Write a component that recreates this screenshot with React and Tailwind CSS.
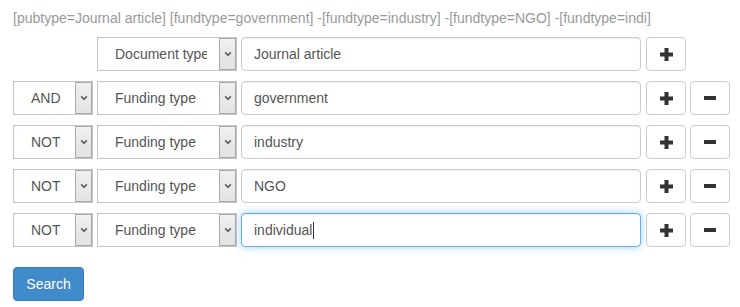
import React from "react";

const font = { fontFamily: '"Liberation Sans", Arial, sans-serif' };

function Chevron() {
  return (
    <svg width="8" height="6" viewBox="0 0 8 6">
      <path d="M1.2 1.4 L4 4.2 L6.8 1.4" fill="none" stroke="#555" strokeWidth="1.5" />
    </svg>
  );
}

function Select({ text, wide }) {
  return (
    <div
      className={`flex h-[34px] shrink-0 items-stretch border border-[#c4c4c4] bg-white ${
        wide ? "w-[140px]" : "w-[80px]"
      }`}
    >
      <div className="flex min-w-0 flex-1 items-center overflow-hidden whitespace-nowrap pl-[17px] pr-[12px] text-[14px] text-[#555]">
        <span className="min-w-0 overflow-hidden">{text}</span>
      </div>
      <div className="flex w-[17px] items-center justify-center border border-[#a9a9a9] bg-gradient-to-b from-[#f0f0f0] to-[#e2e2e2]">
        <Chevron />
      </div>
    </div>
  );
}

function Plus() {
  return (
    <svg width="13" height="13" viewBox="0 0 13 13">
      <rect x="4.5" y="0" width="4" height="13" fill="#333" />
      <rect x="0" y="4.5" width="13" height="4" fill="#333" />
    </svg>
  );
}

function Minus() {
  return (
    <svg width="12" height="4" viewBox="0 0 12 4">
      <rect x="0" y="0" width="12" height="4" fill="#333" />
    </svg>
  );
}

function IconButton({ children }) {
  return (
    <button className="flex h-[34px] w-[40px] shrink-0 items-center justify-center rounded-[4px] border border-[#ccc] bg-white">
      {children}
    </button>
  );
}

function Row({ op, field, value, focused, first }) {
  return (
    <div className="flex items-center">
      {first ? (
        <div className="w-[84px] shrink-0" />
      ) : (
        <div className="mr-[4px]">
          <Select text={op} />
        </div>
      )}
      <Select text={field} wide />
      <div
        className={`ml-[4px] flex h-[34px] w-[400px] shrink-0 items-center rounded-[4px] border bg-white pl-[12px] text-[14px] text-[#555] ${
          focused
            ? "border-[#66afe9] shadow-[inset_0_1px_1px_rgba(0,0,0,0.075),0_0_8px_rgba(102,175,233,0.6)]"
            : "border-[#ccc] shadow-[inset_0_1px_1px_rgba(0,0,0,0.075)]"
        }`}
      >
        <span>{value}</span>
        {focused && <span className="ml-[1px] inline-block h-[17px] w-[1px] bg-[#333]" />}
      </div>
      <div className="ml-[5px] flex gap-[4px]">
        <IconButton>
          <Plus />
        </IconButton>
        {!first && (
          <IconButton>
            <Minus />
          </IconButton>
        )}
      </div>
    </div>
  );
}

export default function App() {
  return (
    <div className="h-[307px] w-[740px] bg-white pl-[13px] pt-[8px]" style={font}>
      <div className="h-[20px] whitespace-nowrap text-[14px] leading-[20px] text-[#999]">
        [pubtype=Journal article] [fundtype=government] -[fundtype=industry] -[fundtype=NGO] -[fundtype=indi]
      </div>
      <div className="mt-[9px] flex flex-col gap-[10px]">
        <Row first field="Document type" value="Journal article" />
        <Row op="AND" field="Funding type" value="government" />
        <Row op="NOT" field="Funding type" value="industry" />
        <Row op="NOT" field="Funding type" value="NGO" />
        <Row op="NOT" field="Funding type" value="individual" focused />
      </div>
      <button className="mt-[20px] h-[34px] w-[71px] rounded-[4px] border border-[#357ebd] bg-[#428bca] text-[14px] text-white">
        Search
      </button>
    </div>
  );
}
